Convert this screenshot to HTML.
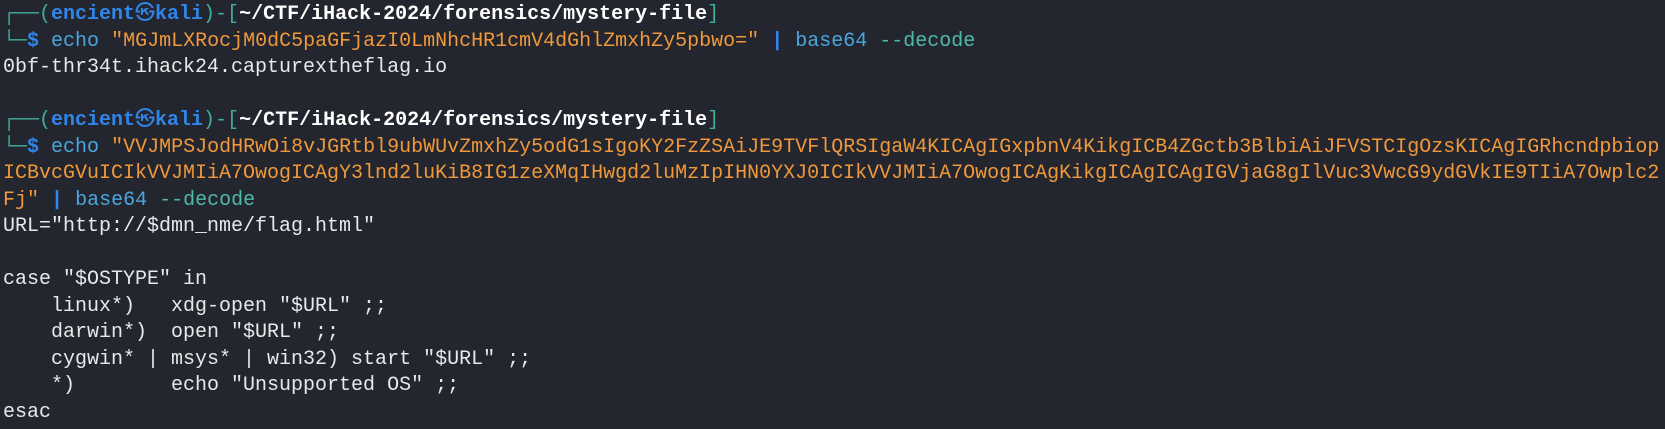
<!DOCTYPE html>
<html><head><meta charset="utf-8"><style>
html,body{margin:0;padding:0;background:#23262f;width:1665px;height:429px;overflow:hidden}
pre{margin:0;position:absolute;left:3px;top:2px;font-family:"Liberation Mono","DejaVu Sans Mono","Noto Sans CJK JP",monospace;font-size:20px;line-height:26.5px;color:#e8e8e8;white-space:pre}
.t{color:#3fae9c}.b{color:#2f86e8;font-weight:bold}.w{color:#fff;font-weight:bold}
.e{color:#4aa6de}.s{color:#f0983a}.p{color:#2f86e8;font-weight:bold}.d{color:#4fbaa6}
</style></head><body><pre><span class="t">┌──(</span><span class="b">encient㉿kali</span><span class="t">)-[</span><span class="w">~/CTF/iHack-2024/forensics/mystery-file</span><span class="t">]</span>
<span class="t">└─</span><span class="b">$</span> <span class="e">echo</span> <span class="s">"MGJmLXRocjM0dC5paGFjazI0LmNhcHR1cmV4dGhlZmxhZy5pbwo="</span> <span class="p">|</span> <span class="e">base64</span> <span class="d">--decode</span>
0bf-thr34t.ihack24.capturextheflag.io

<span class="t">┌──(</span><span class="b">encient㉿kali</span><span class="t">)-[</span><span class="w">~/CTF/iHack-2024/forensics/mystery-file</span><span class="t">]</span>
<span class="t">└─</span><span class="b">$</span> <span class="e">echo</span> <span class="s">"VVJMPSJodHRwOi8vJGRtbl9ubWUvZmxhZy5odG1sIgoKY2FzZSAiJE9TVFlQRSIgaW4KICAgIGxpbnV4KikgICB4ZGctb3BlbiAiJFVSTCIgOzsKICAgIGRhcndpbiop</span>
<span class="s">ICBvcGVuICIkVVJMIiA7OwogICAgY3lnd2luKiB8IG1zeXMqIHwgd2luMzIpIHN0YXJ0ICIkVVJMIiA7OwogICAgKikgICAgICAgIGVjaG8gIlVuc3VwcG9ydGVkIE9TIiA7Owplc2</span>
<span class="s">Fj"</span> <span class="p">|</span> <span class="e">base64</span> <span class="d">--decode</span>
URL="http://$dmn_nme/flag.html"

case "$OSTYPE" in
    linux*)   xdg-open "$URL" ;;
    darwin*)  open "$URL" ;;
    cygwin* | msys* | win32) start "$URL" ;;
    *)        echo "Unsupported OS" ;;
esac</pre></body></html>
